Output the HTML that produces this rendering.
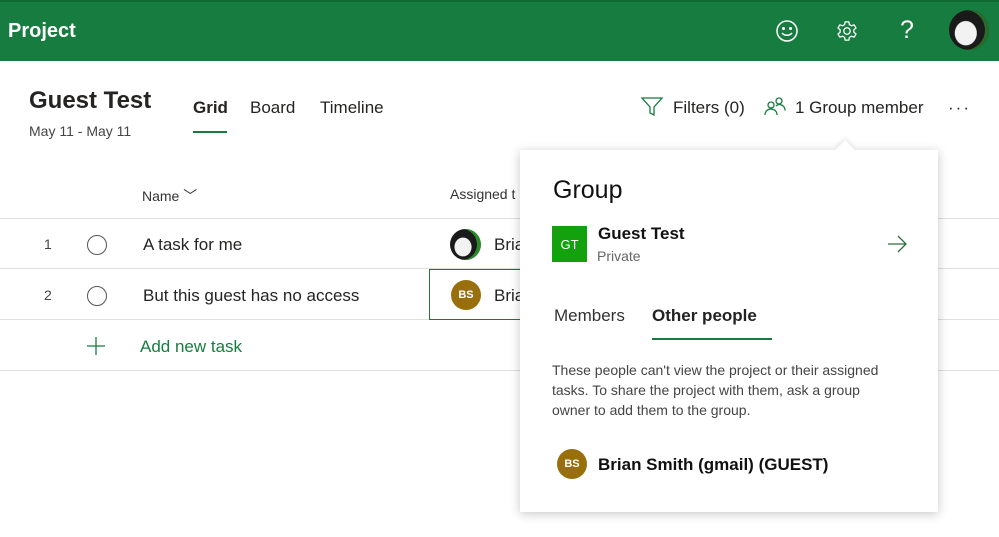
<!DOCTYPE html>
<html><head><style>
*{margin:0;padding:0;box-sizing:border-box}
body{width:999px;height:537px;overflow:hidden;background:#fff;font-family:"Liberation Sans",sans-serif;color:#252423;position:relative}
.a{position:absolute;white-space:nowrap}
.hdr{position:absolute;left:0;top:0;width:999px;height:61px;background:#167c3f;border-top:2px solid #0f6a33}
.line{position:absolute;left:0;height:1px;background:#e1dfdd;width:999px}
.circ{position:absolute;width:20px;height:20px;border:1.3px solid #555;border-radius:50%}
.bs{position:absolute;border-radius:50%;background:#986f0b;color:#fff;font-size:11px;font-weight:bold;display:flex;align-items:center;justify-content:center}
.face{position:absolute;border-radius:50%;background:radial-gradient(ellipse 38% 42% at 42% 58%,#f2f2f2 0 70%,#1a1a1a 75%),#1a1a1a;overflow:hidden}
</style></head><body>
<div class="hdr"></div>
<div class="a" style="left:8px;top:20px;color:#fff;font-size:20px;font-weight:bold">Project</div>
<svg class="a" style="left:775px;top:19px" width="24" height="24" viewBox="0 0 24 24" fill="none" stroke="#fff" stroke-width="1.5"><circle cx="12" cy="12" r="10"/><circle cx="8.5" cy="9.5" r=".8" fill="#fff"/><circle cx="15.5" cy="9.5" r=".8" fill="#fff"/><path d="M7 14c2.5 3 7.5 3 10 0"/></svg>
<svg class="a" style="left:836px;top:20px" width="22" height="22" viewBox="0 0 24 24" fill="none" stroke="#fff" stroke-width="1.4"><circle cx="12" cy="12" r="3.5"/><path d="M10 2h4l.6 3 2.3 1.3 2.9-1 2 3.4-2.3 2v2.6l2.3 2-2 3.4-2.9-1-2.3 1.3-.6 3h-4l-.6-3-2.3-1.3-2.9 1-2-3.4 2.3-2v-2.6l-2.3-2 2-3.4 2.9 1L9.4 5z"/></svg>
<div class="a" style="left:900px;top:16px;color:#fff;font-size:25px;font-weight:300">?</div>
<div class="face" style="left:949px;top:10px;width:40px;height:40px;box-shadow:inset -4px 0 0 #2a6a2a"></div>

<div class="a" style="left:29px;top:87px;font-size:24px;font-weight:bold">Guest Test</div>
<div class="a" style="left:29px;top:123px;font-size:14px;color:#444">May 11 - May 11</div>
<div class="a" style="left:193px;top:98px;font-size:17px;font-weight:bold">Grid</div>
<div class="a" style="left:193px;top:131px;width:34px;height:2px;background:#167c3f"></div>
<div class="a" style="left:250px;top:98px;font-size:17px">Board</div>
<div class="a" style="left:320px;top:98px;font-size:17px">Timeline</div>
<svg class="a" style="left:641px;top:97px" width="22" height="20" viewBox="0 0 22 20" fill="none" stroke="#167c3f" stroke-width="1.3"><path d="M1 1h20l-8 9v8l-4-2v-6z"/></svg>
<div class="a" style="left:673px;top:98px;font-size:17px">Filters (0)</div>
<svg class="a" style="left:764px;top:96px" width="22" height="20" viewBox="0 0 22 20" fill="none" stroke="#167c3f" stroke-width="1.3"><circle cx="7" cy="9" r="3"/><path d="M1 19c0-4 3-6 6-6s6 2 6 6"/><circle cx="15" cy="5" r="3"/><path d="M12 10c1-1 2-1.5 3-1.5 3 0 6 2 6 6"/></svg>
<div class="a" style="left:795px;top:98px;font-size:17px">1 Group member</div>
<div class="a" style="left:948px;top:98px;font-size:17px;letter-spacing:2px">···</div>

<div class="a" style="left:142px;top:186px;font-size:14px;color:#333">Name ﹀</div>
<div class="a" style="left:450px;top:186px;font-size:14px;color:#333">Assigned t</div>
<div class="line" style="top:218px"></div>
<div class="line" style="top:268px"></div>
<div class="line" style="top:319px"></div>
<div class="line" style="top:370px"></div>
<div class="a" style="left:44px;top:236px;font-size:14px;color:#444">1</div>
<div class="circ" style="left:87px;top:235px"></div>
<div class="a" style="left:143px;top:235px;font-size:17px">A task for me</div>
<div class="face" style="left:450px;top:229px;width:31px;height:31px;box-shadow:inset -4px 0 0 #2a8a2a"></div>
<div class="a" style="left:494px;top:235px;font-size:17px">Bria</div>
<div class="a" style="left:44px;top:287px;font-size:14px;color:#444">2</div>
<div class="circ" style="left:87px;top:286px"></div>
<div class="a" style="left:143px;top:286px;font-size:17px">But this guest has no access</div>
<div class="a" style="left:429px;top:269px;width:95px;height:51px;border:1.5px solid #2f6f3a"></div>
<div class="bs" style="left:451px;top:280px;width:30px;height:30px">BS</div>
<div class="a" style="left:494px;top:286px;font-size:17px">Bria</div>
<svg class="a" style="left:86px;top:336px" width="20" height="20" viewBox="0 0 20 20" stroke="#167c3f" stroke-width="1.3"><path d="M10 1v18M1 10h18"/></svg>
<div class="a" style="left:140px;top:337px;font-size:17px;color:#167c3f">Add new task</div>

<div class="a" style="left:520px;top:150px;width:418px;height:362px;background:#fff;box-shadow:0 2px 10px rgba(0,0,0,.22)"></div>
<div class="a" style="left:838px;top:143px;width:14px;height:14px;background:#fff;transform:rotate(45deg);box-shadow:-2px -2px 4px rgba(0,0,0,.08)"></div>
<div class="a" style="left:553px;top:176px;font-size:25px;color:#111">Group</div>
<div class="a" style="left:552px;top:226px;width:35px;height:36px;background:#13a10e;color:#fff;font-size:13px;display:flex;align-items:center;justify-content:center">GT</div>
<div class="a" style="left:598px;top:224px;font-size:17px;font-weight:bold;color:#111">Guest Test</div>
<div class="a" style="left:597px;top:248px;font-size:14px;color:#666">Private</div>
<svg class="a" style="left:887px;top:235px" width="21" height="18" viewBox="0 0 21 18" fill="none" stroke="#2f6f3a" stroke-width="1.3"><path d="M1 9h18M11 1l8 8-8 8"/></svg>
<div class="a" style="left:554px;top:306px;font-size:17px;color:#333">Members</div>
<div class="a" style="left:652px;top:306px;font-size:17px;font-weight:bold;color:#222">Other people</div>
<div class="a" style="left:652px;top:338px;width:120px;height:2px;background:#167c3f"></div>
<div class="a" style="left:552px;top:360px;font-size:14px;color:#444;line-height:20px;white-space:normal;width:345px">These people can't view the project or their assigned tasks. To share the project with them, ask a group owner to add them to the group.</div>
<div class="bs" style="left:557px;top:449px;width:30px;height:30px">BS</div>
<div class="a" style="left:598px;top:455px;font-size:17px;font-weight:bold;color:#111">Brian Smith (gmail) (GUEST)</div>
</body></html>
